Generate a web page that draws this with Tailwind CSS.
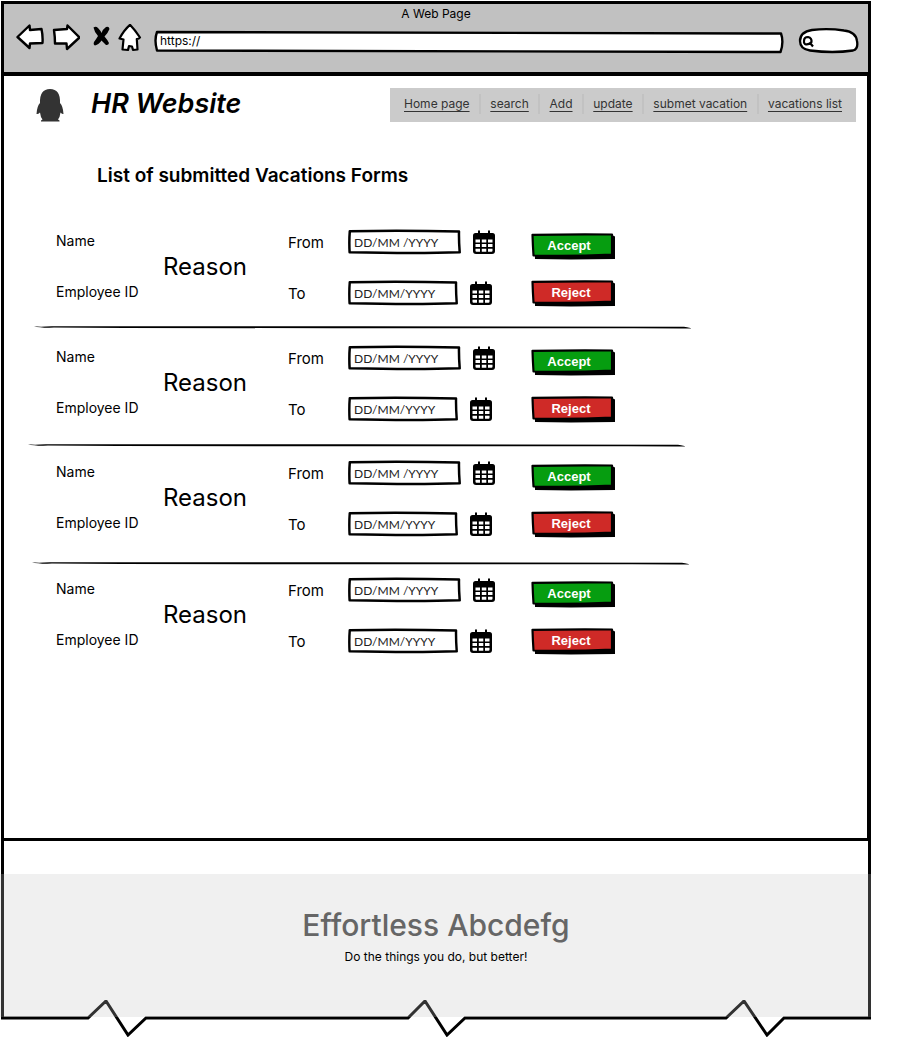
<!DOCTYPE html>
<html lang="en">
<head>
<meta charset="utf-8">
<title>HR Website</title>
<script src="https://cdn.jsdelivr.net/npm/@tailwindcss/browser@4"></script>
</head>
<body class="bg-white font-['Inter','Liberation_Sans',sans-serif] text-black">
<svg class="hidden" aria-hidden="true">
  <symbol id="cal" viewBox="0 0 22 24">
    <path d="M6 1.200v3M16 1.200v3" stroke="#000" stroke-width="2" stroke-linecap="round"/>
    <path d="M2.500 3h17q2.500 0 2.500 2.500v15.500q0 3-3 3h-16q-3 0-3-3v-15.500q0-2.500 2.500-2.500z"/>
    <path fill="#fff" d="M2.500 9.500h4.500v3H2.500zM8.800 9.500h4.500v3H8.800zM15 9.500h4.500v3H15zM2.500 14h4.500v3H2.500zM8.800 14h4.500v3H8.800zM15 14h4.500v3H15zM2.500 18.700h4.500v3H3.500q-1 0-1-1zM8.800 18.700h4.500v3H8.800zM15 18.700h4.500v2q0 1-1 1H15z"/>
  </symbol>
  <symbol id="box" viewBox="0 0 113 26" preserveAspectRatio="none">
    <path d="M1.800 2.200Q56 1.300 111 2.500Q110.800 12 111.700 23.300Q70 24.800 1.600 23.300Q1 12 1.800 2.200z" fill="#fff" stroke="#000" stroke-width="2.500" stroke-linejoin="round"/>
  </symbol>
  <symbol id="btn" viewBox="0 0 84 27" preserveAspectRatio="none">
    <path d="M3.500 5L82 2.500L84 3.500V26L40 26.500L4 26z" fill="#000"/>
    <path d="M1.500 1.800Q40 1.200 81 1.500L81 21.500Q40 23.500 2.500 22.500Q1.800 12 1.500 1.800z" fill="currentColor" stroke="#000" stroke-width="2.200" stroke-linejoin="round"/>
  </symbol>
  <symbol id="rule" viewBox="0 0 657 6" preserveAspectRatio="none">
    <path d="M0 2.200Q4 3 18 2.300L330 2.200L650 2.800Q657 3.800 657 4.400Q640 4.300 600 4.200L300 4.200L90 4L20 3.600Q6 4 0 2.200z"/>
  </symbol>
</svg>

<div class="mr-[49px]">
  <div class="ml-px pt-px">
    <header class="border-3 border-b-4 border-black bg-[#c1c1c1]">
      <p class="text-center text-xs leading-5">A Web Page</p>
      <div class="flex h-12 items-start pr-[9px] pl-3">
        <button aria-label="Back"><svg class="h-7 w-7" viewBox="0 0 28 28"><path d="M1.500 13L13.500 1.500L14 6L25.500 5Q27 12 26.500 19L14 19.500L13.500 24z" fill="#fff" stroke="#000" stroke-width="2.400" stroke-linejoin="round"/></svg></button>
        <button class="ml-2" aria-label="Forward"><svg class="h-7 w-7" viewBox="0 0 28 28"><path d="M2 6L15 5L15.500 1.500L27.500 13.500L15 25L14.500 19.500L3 19.500Q3 13 2 6z" fill="#fff" stroke="#000" stroke-width="2.400" stroke-linejoin="round"/></svg></button>
        <button class="ml-[11px]" aria-label="Stop"><svg class="h-7 w-5" viewBox="0 0 20 28"><path d="M2.500 3.500Q5 2 7 4Q9.500 6.500 10.500 9Q12 5 15 3Q18 2 18.500 5Q17 9 13.500 12.500Q17 16.500 18 19Q17.500 21.500 15 21L10.500 16.500Q8 20.500 4 21.500Q2 20.500 3 18Q5.500 14.500 7 12Q3.500 8.500 2.500 3.500z"/></svg></button>
        <button class="ml-[7px]" aria-label="Home"><svg class="h-7 w-6" viewBox="0 0 24 28"><path d="M12 .8Q17 6 22 13.500Q21 15 18.800 15L19.500 25.500L15 26L14 22.500L11 22L10 26L4.500 25.500L5.500 15.500L1.500 14.500Q6 6 12 .8z" fill="#fff" stroke="#000" stroke-width="2.200" stroke-linejoin="round"/></svg></button>
        <label class="mt-1.5 ml-3 grid h-6 min-w-0 flex-1">
          <svg class="h-6 w-full [grid-area:1/1]" viewBox="0 0 632 24" preserveAspectRatio="none" aria-hidden="true"><path d="M3 2Q300 1.500 629 3.500Q632 12 628.500 22Q300 20 3 20.500Q0 10 3 2z" fill="#fff" stroke="#000" stroke-width="2.400" stroke-linejoin="round"/></svg>
          <input aria-label="Address" class="h-5 w-full bg-transparent pl-1.5 text-xs [grid-area:1/1]" value="https://">
        </label>
        <label class="mt-[3px] ml-[14px] grid h-7 w-[61px]">
          <svg class="h-7 w-[61px] [grid-area:1/1]" viewBox="0 0 61 28" aria-hidden="true"><path d="M2 14Q2 5 14 3Q30 1 46 3.500Q58 5 59 14Q60.500 22 55 23.500Q35 26.500 12 23.500Q2 22 2 14z" fill="#fff" stroke="#000" stroke-width="2.300"/><path d="M12.500 16.500L15 19.500M6 14Q6 10 10 10Q14 11 13.500 15Q10 18.500 7 17Q5.500 16 6 14z" fill="none" stroke="#000" stroke-width="2.200"/></svg>
          <input aria-label="Search the web" class="h-6 w-full bg-transparent pr-2 pl-5 text-xs [grid-area:1/1]">
        </label>
      </div>
    </header>

    <main class="border-r-4 border-b-3 border-l-3 border-black pb-[183px]">
      <div class="flex items-center pt-3 pr-[11px] pl-8">
        <svg class="h-[34px] w-[28px]" viewBox="0 0 28 34" aria-hidden="true"><path fill="#333" d="M14 1Q24.500 1 24 15Q27 18 27.500 26Q26.500 26.500 24.500 24.500Q24 29 22 31.500L23.500 32.500V33.500H5V32.500L6.500 31.500Q4.500 29 4 24.500Q2 26.500 .5 26Q1 18 4 15Q3.500 1 14 1z"/></svg>
        <h1 class="ml-[27px] pb-0.5 text-[27px] leading-8 font-semibold italic">HR Website</h1>
        <nav class="ml-auto flex h-[34px] w-[466px] items-center justify-between bg-[#cbcbcb] px-3.5 pb-0.5 text-xs text-[#333]">
          <a class="underline underline-offset-3" href="#">Home page</a>
          <span class="h-5 w-0.5 bg-[#c2c2c2]"></span>
          <a class="underline underline-offset-3" href="#">search</a>
          <span class="h-5 w-0.5 bg-[#c2c2c2]"></span>
          <a class="underline underline-offset-3" href="#">Add</a>
          <span class="h-5 w-0.5 bg-[#c2c2c2]"></span>
          <a class="underline underline-offset-3" href="#">update</a>
          <span class="h-5 w-0.5 bg-[#c2c2c2]"></span>
          <a class="underline underline-offset-3" href="#">submet vacation</a>
          <span class="h-5 w-0.5 bg-[#c2c2c2]"></span>
          <a class="underline underline-offset-3" href="#">vacations list</a>
        </nav>
      </div>

      <h2 class="mt-10 ml-[93px] text-[19px] leading-7 font-semibold">List of submitted Vacations Forms</h2>

      <section class="mt-[39px] flex pl-[52px] text-sm leading-6">
        <div class="flex w-[107px] flex-col gap-[27px]"><span>Name</span><span>Employee ID</span></div>
        <p class="w-[125px] self-center pb-0.5 text-2xl leading-6">Reason</p>
        <div class="flex w-[60px] flex-col gap-[27px] pt-0.5 text-[15px] leading-6"><label for="f1">From</label><label for="t1">To</label></div>
        <div class="flex w-[183px] flex-col gap-[25px]">
          <div class="flex gap-3"><div class="grid h-[26px] w-[113px]"><svg class="h-[26px] w-full [grid-area:1/1]"><use href="#box"/></svg><input id="f1" class="h-[26px] w-full bg-transparent px-1.5 font-['Lato'] text-[12px] [grid-area:1/1] placeholder:text-[#222]" placeholder="DD/MM /YYYY"></div><svg class="mt-px h-6 w-[22px]"><use href="#cal"/></svg></div>
          <div class="flex gap-3"><div class="grid h-[26px] w-[110px]"><svg class="h-[26px] w-full [grid-area:1/1]"><use href="#box"/></svg><input id="t1" class="h-[26px] w-full bg-transparent px-1.5 font-['Lato'] text-[12px] [grid-area:1/1] placeholder:text-[#222]" placeholder="DD/MM/YYYY"></div><svg class="mt-px h-6 w-[22px]"><use href="#cal"/></svg></div>
        </div>
        <div class="flex flex-col gap-5 pt-1 font-['Liberation_Sans'] text-[13px] font-bold text-white">
          <button class="grid h-[27px] w-[84px]"><svg class="h-[27px] w-[84px] text-[#069d10] [grid-area:1/1]"><use href="#btn"/></svg><span class="pt-px pr-2 [grid-area:1/1]">Accept</span></button>
          <button class="grid h-[27px] w-[84px]"><svg class="h-[27px] w-[84px] text-[#cf2a27] [grid-area:1/1]"><use href="#btn"/></svg><span class="pt-px pr-1 [grid-area:1/1]">Reject</span></button>
        </div>
      </section>
      <svg class="mt-[17px] mb-[15px] ml-[30px] block h-1.5 w-[657px]" aria-hidden="true"><use href="#rule"/></svg>

      <section class="flex pl-[52px] text-sm leading-6">
        <div class="flex w-[107px] flex-col gap-[27px]"><span>Name</span><span>Employee ID</span></div>
        <p class="w-[125px] self-center pb-0.5 text-2xl leading-6">Reason</p>
        <div class="flex w-[60px] flex-col gap-[27px] pt-0.5 text-[15px] leading-6"><label for="f2">From</label><label for="t2">To</label></div>
        <div class="flex w-[183px] flex-col gap-[25px]">
          <div class="flex gap-3"><div class="grid h-[26px] w-[113px]"><svg class="h-[26px] w-full [grid-area:1/1]"><use href="#box"/></svg><input id="f2" class="h-[26px] w-full bg-transparent px-1.5 font-['Lato'] text-[12px] [grid-area:1/1] placeholder:text-[#222]" placeholder="DD/MM /YYYY"></div><svg class="mt-px h-6 w-[22px]"><use href="#cal"/></svg></div>
          <div class="flex gap-3"><div class="grid h-[26px] w-[110px]"><svg class="h-[26px] w-full [grid-area:1/1]"><use href="#box"/></svg><input id="t2" class="h-[26px] w-full bg-transparent px-1.5 font-['Lato'] text-[12px] [grid-area:1/1] placeholder:text-[#222]" placeholder="DD/MM/YYYY"></div><svg class="mt-px h-6 w-[22px]"><use href="#cal"/></svg></div>
        </div>
        <div class="flex flex-col gap-5 pt-1 font-['Liberation_Sans'] text-[13px] font-bold text-white">
          <button class="grid h-[27px] w-[84px]"><svg class="h-[27px] w-[84px] text-[#069d10] [grid-area:1/1]"><use href="#btn"/></svg><span class="pt-px pr-2 [grid-area:1/1]">Accept</span></button>
          <button class="grid h-[27px] w-[84px]"><svg class="h-[27px] w-[84px] text-[#cf2a27] [grid-area:1/1]"><use href="#btn"/></svg><span class="pt-px pr-1 [grid-area:1/1]">Reject</span></button>
        </div>
      </section>
      <svg class="mt-[19px] mb-3 ml-6 block h-1.5 w-[657px]" aria-hidden="true"><use href="#rule"/></svg>

      <section class="flex pl-[52px] text-sm leading-6">
        <div class="flex w-[107px] flex-col gap-[27px]"><span>Name</span><span>Employee ID</span></div>
        <p class="w-[125px] self-center pb-0.5 text-2xl leading-6">Reason</p>
        <div class="flex w-[60px] flex-col gap-[27px] pt-0.5 text-[15px] leading-6"><label for="f3">From</label><label for="t3">To</label></div>
        <div class="flex w-[183px] flex-col gap-[25px]">
          <div class="flex gap-3"><div class="grid h-[26px] w-[113px]"><svg class="h-[26px] w-full [grid-area:1/1]"><use href="#box"/></svg><input id="f3" class="h-[26px] w-full bg-transparent px-1.5 font-['Lato'] text-[12px] [grid-area:1/1] placeholder:text-[#222]" placeholder="DD/MM /YYYY"></div><svg class="mt-px h-6 w-[22px]"><use href="#cal"/></svg></div>
          <div class="flex gap-3"><div class="grid h-[26px] w-[110px]"><svg class="h-[26px] w-full [grid-area:1/1]"><use href="#box"/></svg><input id="t3" class="h-[26px] w-full bg-transparent px-1.5 font-['Lato'] text-[12px] [grid-area:1/1] placeholder:text-[#222]" placeholder="DD/MM/YYYY"></div><svg class="mt-px h-6 w-[22px]"><use href="#cal"/></svg></div>
        </div>
        <div class="flex flex-col gap-5 pt-1 font-['Liberation_Sans'] text-[13px] font-bold text-white">
          <button class="grid h-[27px] w-[84px]"><svg class="h-[27px] w-[84px] text-[#069d10] [grid-area:1/1]"><use href="#btn"/></svg><span class="pt-px pr-2 [grid-area:1/1]">Accept</span></button>
          <button class="grid h-[27px] w-[84px]"><svg class="h-[27px] w-[84px] text-[#cf2a27] [grid-area:1/1]"><use href="#btn"/></svg><span class="pt-px pr-1 [grid-area:1/1]">Reject</span></button>
        </div>
      </section>
      <svg class="mt-[22px] mb-[11px] ml-7 block h-1.5 w-[657px]" aria-hidden="true"><use href="#rule"/></svg>

      <section class="flex pl-[52px] text-sm leading-6">
        <div class="flex w-[107px] flex-col gap-[27px]"><span>Name</span><span>Employee ID</span></div>
        <p class="w-[125px] self-center pb-0.5 text-2xl leading-6">Reason</p>
        <div class="flex w-[60px] flex-col gap-[27px] pt-0.5 text-[15px] leading-6"><label for="f4">From</label><label for="t4">To</label></div>
        <div class="flex w-[183px] flex-col gap-[25px]">
          <div class="flex gap-3"><div class="grid h-[26px] w-[113px]"><svg class="h-[26px] w-full [grid-area:1/1]"><use href="#box"/></svg><input id="f4" class="h-[26px] w-full bg-transparent px-1.5 font-['Lato'] text-[12px] [grid-area:1/1] placeholder:text-[#222]" placeholder="DD/MM /YYYY"></div><svg class="mt-px h-6 w-[22px]"><use href="#cal"/></svg></div>
          <div class="flex gap-3"><div class="grid h-[26px] w-[110px]"><svg class="h-[26px] w-full [grid-area:1/1]"><use href="#box"/></svg><input id="t4" class="h-[26px] w-full bg-transparent px-1.5 font-['Lato'] text-[12px] [grid-area:1/1] placeholder:text-[#222]" placeholder="DD/MM/YYYY"></div><svg class="mt-px h-6 w-[22px]"><use href="#cal"/></svg></div>
        </div>
        <div class="flex flex-col gap-5 pt-1 font-['Liberation_Sans'] text-[13px] font-bold text-white">
          <button class="grid h-[27px] w-[84px]"><svg class="h-[27px] w-[84px] text-[#069d10] [grid-area:1/1]"><use href="#btn"/></svg><span class="pt-px pr-2 [grid-area:1/1]">Accept</span></button>
          <button class="grid h-[27px] w-[84px]"><svg class="h-[27px] w-[84px] text-[#cf2a27] [grid-area:1/1]"><use href="#btn"/></svg><span class="pt-px pr-1 [grid-area:1/1]">Reject</span></button>
        </div>
      </section>
    </main>
    <div class="h-[33px] border-x-3 border-black"></div>
  </div>

  <footer>
    <div class="bg-[#f0f0f0] pl-px">
      <div class="border-x-3 border-[#333] pt-[31px] pb-[31px] text-center">
        <h2 class="text-[30px] leading-10 font-medium text-[#666]">Effortless Abcdefg</h2>
        <p class="text-xs leading-6">Do the things you do, but better!</p>
      </div>
    </div>
    <svg class="block h-[37px] w-full" viewBox="0 0 871 37" preserveAspectRatio="none" aria-hidden="true">
      <path d="M2.500 0V18H88L106 1L128 35L146 18H408L425 1L447 35L465 18H726L744 1L767 35L784 18H869.500V0" fill="none" stroke="#000" stroke-width="3"/>
      <path d="M0 0H871V17H0z" fill="#c3c3c3" fill-opacity=".26"/>
    </svg>
  </footer>
</div>
</body>
</html>
